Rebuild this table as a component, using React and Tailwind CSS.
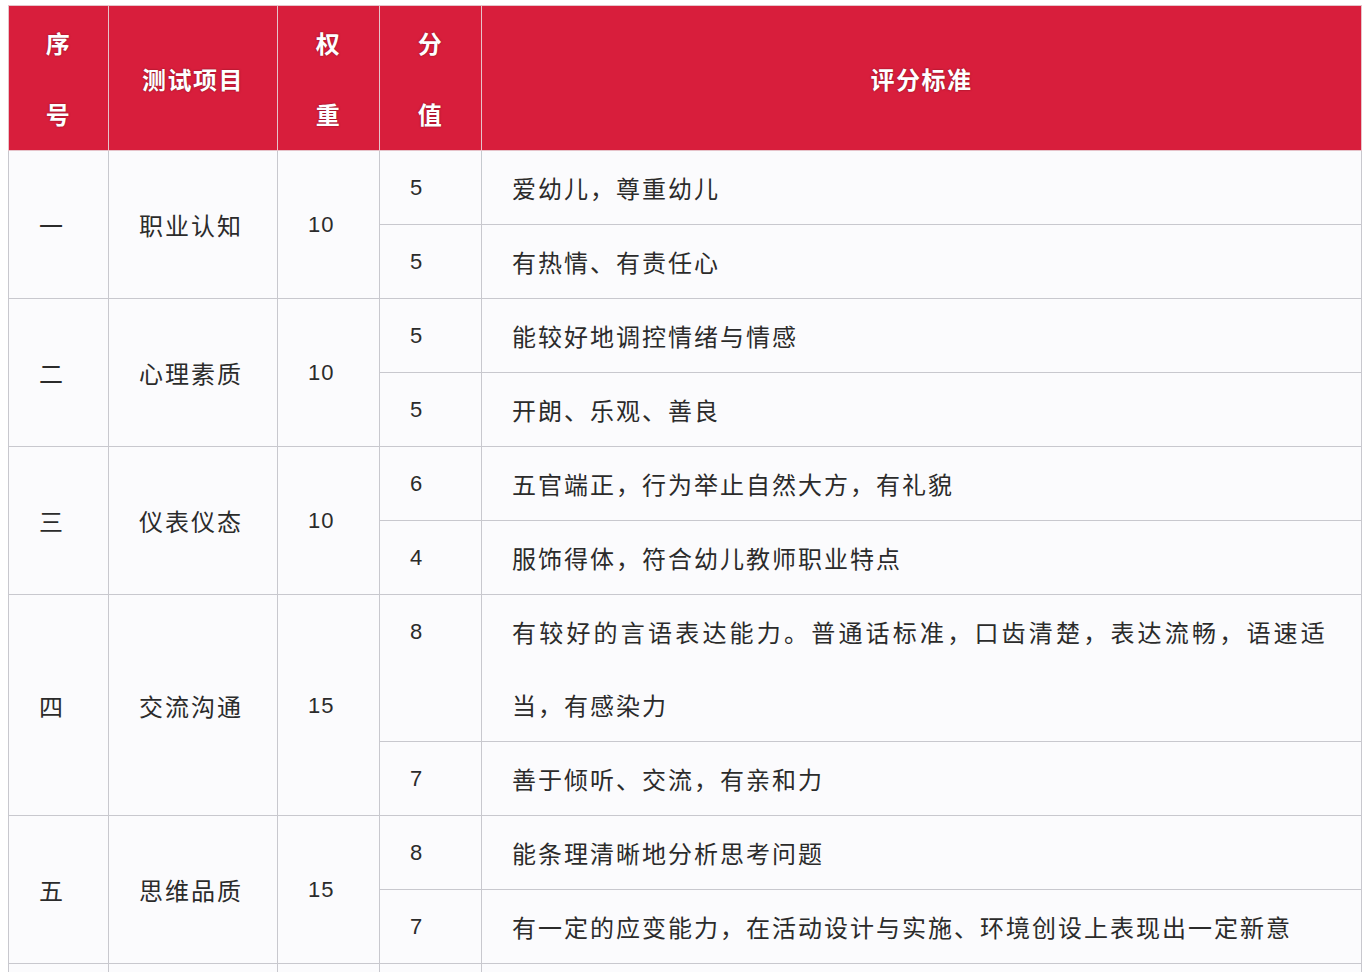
import React from "react";

const rows = [
  {
    no: "一",
    item: "职业认知",
    weight: "10",
    subs: [
      { score: "5", text: "爱幼儿，尊重幼儿" },
      { score: "5", text: "有热情、有责任心" },
    ],
  },
  {
    no: "二",
    item: "心理素质",
    weight: "10",
    subs: [
      { score: "5", text: "能较好地调控情绪与情感" },
      { score: "5", text: "开朗、乐观、善良" },
    ],
  },
  {
    no: "三",
    item: "仪表仪态",
    weight: "10",
    subs: [
      { score: "6", text: "五官端正，行为举止自然大方，有礼貌" },
      { score: "4", text: "服饰得体，符合幼儿教师职业特点" },
    ],
  },
  {
    no: "四",
    item: "交流沟通",
    weight: "15",
    subs: [
      {
        score: "8",
        text: (
          <>
            <span className="tracking-[3.2px]">有较好的言语表达能力。普通话标准，口齿清楚，表达流畅，语速适</span>
            <br />
            当，有感染力
          </>
        ),
      },
      { score: "7", text: "善于倾听、交流，有亲和力" },
    ],
  },
  {
    no: "五",
    item: "思维品质",
    weight: "15",
    subs: [
      { score: "8", text: "能条理清晰地分析思考问题" },
      { score: "7", text: "有一定的应变能力，在活动设计与实施、环境创设上表现出一定新意" },
    ],
  },
];

const cjk = { fontFamily: '"Noto Sans CJK SC", "Noto Sans", sans-serif' };
const num = { fontFamily: '"Liberation Sans", Arial, sans-serif' };

export default function App() {
  const td = "border border-[#c8c8ce] pl-[30px] pr-[30px] py-0 text-left";
  const th =
    "border border-[#e6c3ca] text-white font-bold text-[24px] leading-[71px] tracking-[1.5px] px-[30px] py-0 text-center align-middle [text-shadow:0_0_2px_rgba(60,0,10,0.6)]";
  return (
    <div className="min-h-screen bg-white pt-[5px] pl-[8px]" style={cjk}>
      <table className="table-fixed border-collapse w-[1353px] border border-[#c8c8ce] bg-[#fbfbfd] text-[#2b2b2b]">
        <colgroup>
          <col className="w-[100px]" />
          <col className="w-[169px]" />
          <col className="w-[102px]" />
          <col className="w-[102px]" />
          <col className="w-[880px]" />
        </colgroup>
        <thead>
          <tr className="h-[145px] bg-[#d81e3c]">
            <th className={th}>序号</th>
            <th className={th}>测试项目</th>
            <th className={th}>权重</th>
            <th className={th}>分值</th>
            <th className={th}>评分标准</th>
          </tr>
        </thead>
        <tbody className="text-[24px] leading-[73px] tracking-[2px]">
          {rows.map((r, i) =>
            r.subs.map((s, j) => (
              <tr key={`${i}-${j}`}>
                {j === 0 && (
                  <>
                    <td rowSpan={2} className={`${td} align-middle`}>
                      {r.no}
                    </td>
                    <td rowSpan={2} className={`${td} align-middle`}>
                      {r.item}
                    </td>
                    <td
                      rowSpan={2}
                      className={`${td} align-middle text-[22px] tracking-[1px]`}
                      style={num}
                    >
                      {r.weight}
                    </td>
                  </>
                )}
                <td className={`${td} align-top text-[22px] tracking-normal`} style={num}>
                  {s.score}
                </td>
                <td className={`${td} align-top whitespace-nowrap`}>{s.text}</td>
              </tr>
            ))
          )}
          <tr>
            <td className={td}>&nbsp;</td>
            <td className={td}>&nbsp;</td>
            <td className={td}>&nbsp;</td>
            <td className={td}>&nbsp;</td>
            <td className={td}>&nbsp;</td>
          </tr>
        </tbody>
      </table>
    </div>
  );
}
